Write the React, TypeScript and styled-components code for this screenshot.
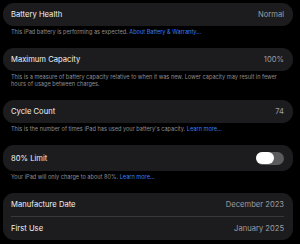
import styled, { createGlobalStyle } from "styled-components";

const GlobalStyle = createGlobalStyle`
  html, body {
    margin: 0;
    padding: 0;
    background: #000;
  }
  body {
    font-family: Inter, "Liberation Sans", sans-serif;
    -webkit-font-smoothing: antialiased;
  }
`;

const Page = styled.div`
  width: 300px;
  height: 244px;
  padding: 3px 7px 0 3px;
  box-sizing: border-box;
  background: #000;
  overflow: hidden;
`;

const Section = styled.section`
  margin-bottom: 12px;
`;

const Card = styled.div`
  background: #1c1c1e;
  border-radius: 11px;
  padding: 0 9px 0 8px;
`;

const Row = styled.div<{ $height: number; $divided?: boolean }>`
  display: flex;
  align-items: center;
  justify-content: space-between;
  height: ${props => props.$height}px;
  border-bottom: ${props => (props.$divided ? "1px solid #38383a" : "none")};
  box-sizing: border-box;
`;

const Label = styled.span`
  color: #f2f2f4;
  font-size: 7.6px;
  letter-spacing: 0.02px;
`;

const Value = styled.span`
  color: #9c9ca2;
  font-size: 7.6px;
`;

const Footnote = styled.p`
  margin: 0;
  padding: 3px 8px 0 8px;
  color: #8d8d93;
  font-size: 5.6px;
  line-height: 7px;
`;

const Link = styled.a`
  color: #3a7ff2;
  text-decoration: none;
`;

const Track = styled.div<{ $on?: boolean }>`
  position: relative;
  width: 28px;
  height: 13px;
  border-radius: 7px;
  background: ${props => (props.$on ? "#34c759" : "#5b5b5f")};
`;

const Knob = styled.div<{ $on?: boolean }>`
  position: absolute;
  top: 0.5px;
  left: ${props => (props.$on ? 10 : 0)}px;
  width: 18px;
  height: 12px;
  border-radius: 6px;
  background: #fff;
`;

interface IInfoRow {
  label: string;
  value: string;
}

const dates: IInfoRow[] = [
  { label: "Manufacture Date", value: "December 2023" },
  { label: "First Use", value: "January 2025" },
];

function App() {
  return (
    <Page>
      <GlobalStyle />
      <Section>
        <Card>
          <Row $height={23}>
            <Label>Battery Health</Label>
            <Value>Normal</Value>
          </Row>
        </Card>
        <Footnote>
          This iPad battery is performing as expected. <Link>About Battery &amp; Warranty...</Link>
        </Footnote>
      </Section>
      <Section>
        <Card>
          <Row $height={23}>
            <Label>Maximum Capacity</Label>
            <Value>100%</Value>
          </Row>
        </Card>
        <Footnote>
          This is a measure of battery capacity relative to when it was new. Lower capacity may result in fewer
          <br />
          hours of usage between charges.
        </Footnote>
      </Section>
      <Section>
        <Card>
          <Row $height={23}>
            <Label>Cycle Count</Label>
            <Value>74</Value>
          </Row>
        </Card>
        <Footnote>
          This is the number of times iPad has used your battery's capacity. <Link>Learn more...</Link>
        </Footnote>
      </Section>
      <Section>
        <Card>
          <Row $height={26}>
            <Label>80% Limit</Label>
            <Track>
              <Knob />
            </Track>
          </Row>
        </Card>
        <Footnote>
          Your iPad will only charge to about 80%. <Link>Learn more...</Link>
        </Footnote>
      </Section>
      <Section>
        <Card>
          {dates.map((row, index) => (
            <Row key={`date-${index}`} $height={23.5} $divided={index < dates.length - 1}>
              <Label>{row.label}</Label>
              <Value>{row.value}</Value>
            </Row>
          ))}
        </Card>
      </Section>
    </Page>
  );
}
export default App;
